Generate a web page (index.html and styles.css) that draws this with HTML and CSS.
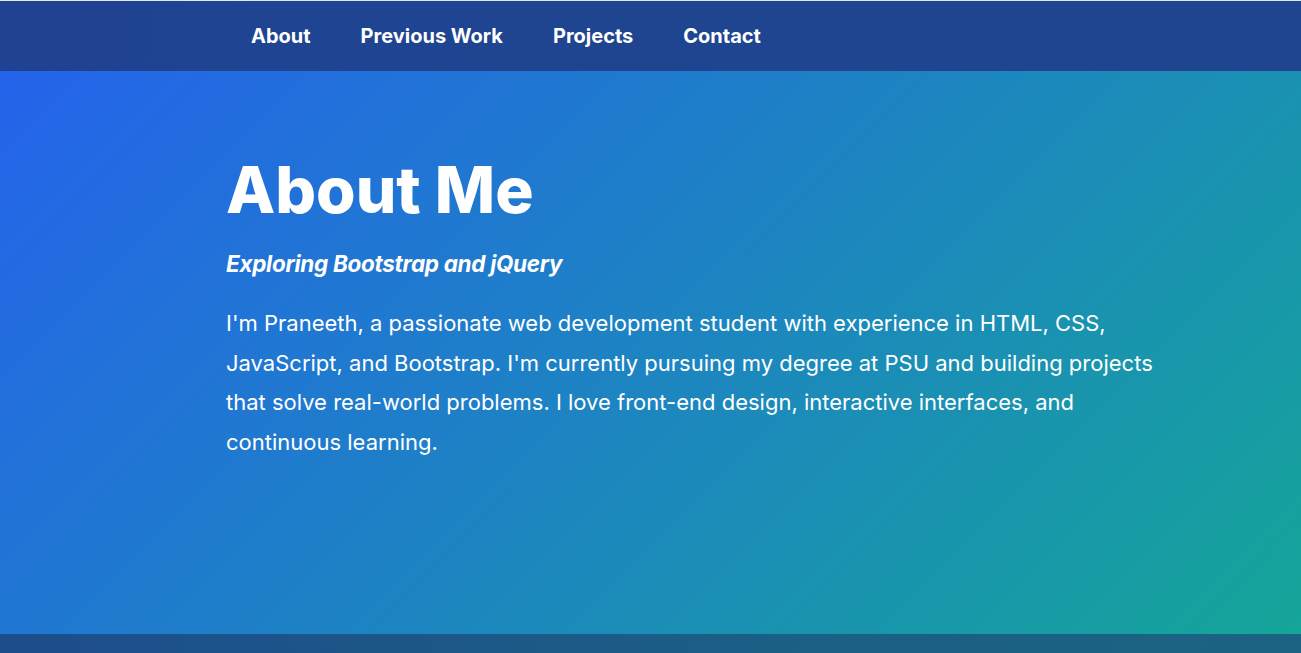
FILE: index.html
```html
<!DOCTYPE html>
<html lang="en">
<head>
<meta charset="utf-8">
<title>About Me</title>
<link rel="stylesheet" href="styles.css">
</head>
<body>
<div class="topline"></div>
<nav class="navbar">
  <ul class="nav-list">
    <li><a href="#about">About</a></li>
    <li><a href="#work">Previous Work</a></li>
    <li><a href="#projects">Projects</a></li>
    <li><a href="#contact">Contact</a></li>
  </ul>
</nav>
<main class="hero" id="about">
  <div class="content">
    <h1 class="title">About Me</h1>
    <p class="subtitle">Exploring Bootstrap and jQuery</p>
    <p class="bio">I'm Praneeth, a passionate web development student with experience in HTML, CSS, JavaScript, and Bootstrap. I'm currently pursuing my degree at PSU and building projects that solve real-world problems. I love front-end design, interactive interfaces, and continuous learning.</p>
  </div>
</main>
<footer class="footer"></footer>
</body>
</html>
```

FILE: styles.css
```css
html, body {
  margin: 0;
  padding: 0;
}
body {
  font-family: Inter, "Noto Sans", sans-serif;
  color: #fff;
  background: #1d5a86;
}
.topline {
  height: 1px;
  background: #e4e6ea;
}
.navbar {
  height: 70px;
  background: linear-gradient(100deg, #1f4392, #1f4590 60%, #1f4590);
  display: flex;
  align-items: center;
  padding-left: 226px;
}
.nav-list {
  list-style: none;
  margin: 0;
  padding: 0;
  display: flex;
}
.nav-list a {
  display: block;
  padding: 0 25px;
  color: #fff;
  text-decoration: none;
  font-family: Inter, sans-serif;
  font-weight: 700;
  font-size: 20px;
  line-height: 70px;
}
.hero {
  height: 563px;
  background: linear-gradient(135deg, #2563eb 0%, #15a599 100%);
  padding-left: 226px;
  box-sizing: border-box;
}
.content {
  max-width: 940px;
  padding-top: 80px;
}
.title {
  margin: 0;
  font-family: Inter, sans-serif;
  font-weight: 800;
  font-size: 64px;
  line-height: 78px;
  letter-spacing: 0px;
}
.subtitle {
  margin: 20px 0 0 0;
  font-style: italic;
  font-weight: 700;
  font-size: 22.5px;
  line-height: 30px;
  letter-spacing: -0.3px;
}
.bio {
  margin: 25px 0 0 0;
  font-size: 22px;
  line-height: 39.6px;
}
.footer {
  height: 19px;
  background: linear-gradient(90deg, #1e4d8c, #1b5f85 60%, #1b6382);
}
```
